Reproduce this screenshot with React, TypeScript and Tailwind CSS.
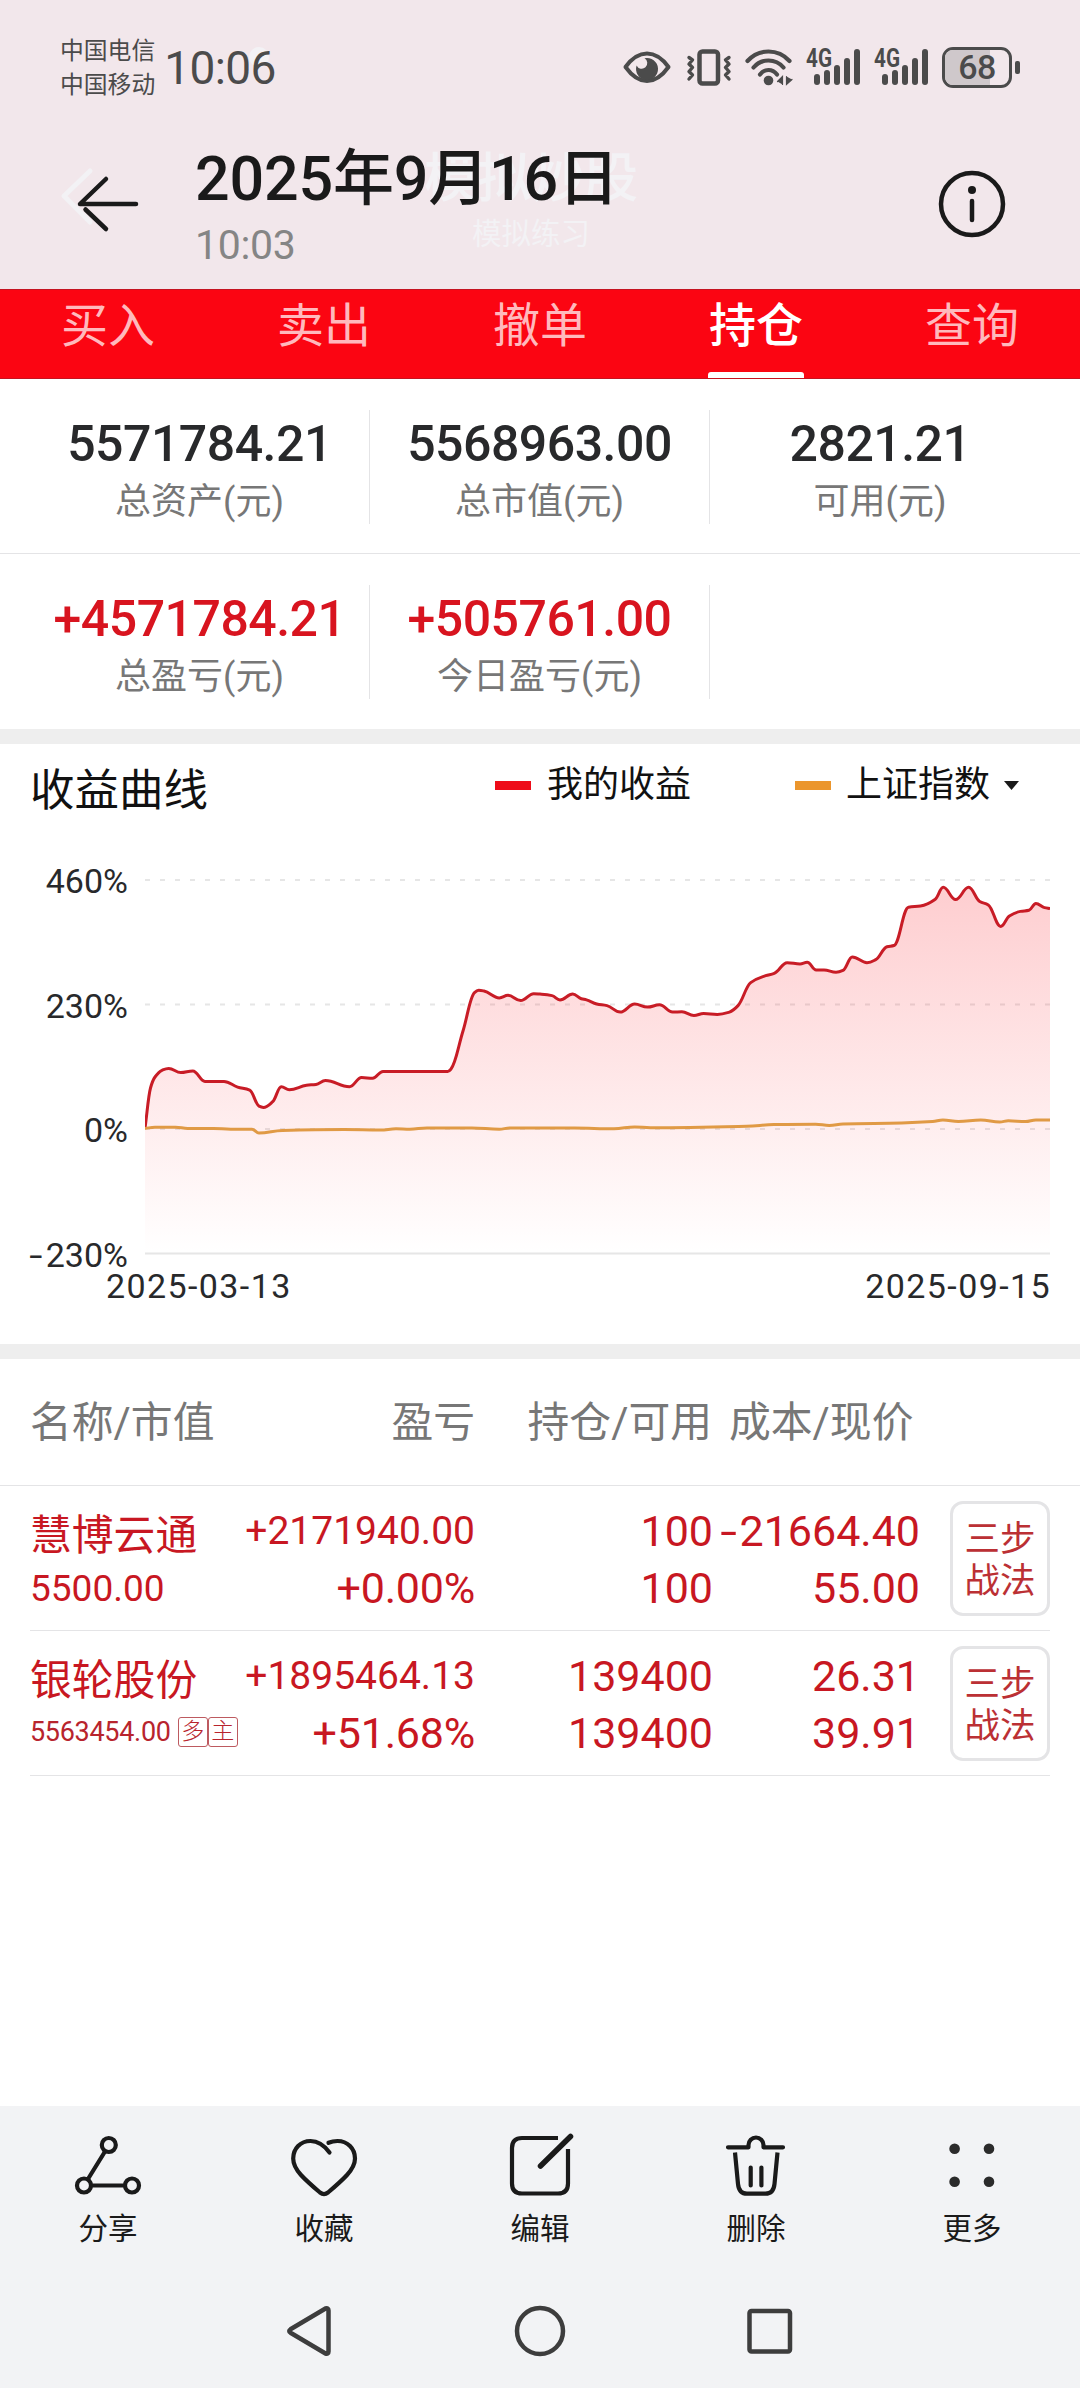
import type { ReactNode } from "react";

type Point = [number, number];

const tabs = ["买入", "卖出", "撤单", "持仓", "查询"];
const activeTab = "持仓";

const summaryRows = [
  [
    { label: "总资产(元)", value: "5571784.21" },
    { label: "总市值(元)", value: "5568963.00" },
    { label: "可用(元)", value: "2821.21" }
  ],
  [
    { label: "总盈亏(元)", value: "+4571784.21" },
    { label: "今日盈亏(元)", value: "+505761.00" },
    null
  ]
];

const holdings = [
  {
    name: "慧博云通",
    marketValue: "5500.00",
    tags: [],
    profit: "+2171940.00",
    profitRate: "+0.00%",
    amount: "100",
    available: "100",
    cost: "-21664.40",
    price: "55.00"
  },
  {
    name: "银轮股份",
    marketValue: "5563454.00",
    tags: ["多", "主"],
    profit: "+1895464.13",
    profitRate: "+51.68%",
    amount: "139400",
    available: "139400",
    cost: "26.31",
    price: "39.91"
  }
];

const profitPoints: Point[] = [
  [0, 249.4], [5.5, 209], [10, 198], [17, 191.3], [23.7, 189.4], [35.8, 193.6], [47.8, 192],
  [60, 202.4], [79, 202.4], [92.6, 208.1], [104.7, 211.2], [114, 227.1], [118.4, 228.4],
  [127.7, 222.7], [136.3, 207.7], [144.3, 210.8], [161.5, 206.2], [171, 205.4], [180.4, 201.6],
  [204.5, 207.7], [216.6, 198.5], [227.6, 199.3], [238, 192.4], [302.7, 192.4], [306, 190],
  [318, 152], [329.5, 113.6], [333.7, 111.3], [339, 112], [354.3, 118.9], [363, 116.3],
  [375.7, 121.6], [388.7, 114.7], [395, 115.1], [407, 116.6], [415, 120.9], [427.7, 115.1],
  [436.3, 119.7], [441.5, 120.9], [451.8, 125], [462, 126.6], [475.2, 133.1], [489.7, 125],
  [502.4, 128.1], [514.5, 125.8], [527.6, 133.1], [536.9, 132.7], [548.9, 136.5], [558.6, 134.6],
  [572.3, 135.4], [584.4, 133.1], [593, 126.6], [605.7, 103.6], [620.6, 96.7], [629.2, 94.4],
  [642.2, 83.7], [655, 84.9], [662.2, 83.3], [671.2, 91], [679, 91], [691, 93.3], [698, 91.4],
  [707.3, 78], [722, 83.7], [730.7, 80.7], [742, 67.7], [749, 66.5], [763.5, 28.2],
  [775.5, 27.1], [790.3, 20.2], [798.2, 8.3], [810.6, 20.6], [823.7, 8.3], [834.7, 22.5],
  [843.3, 25.9], [855.7, 47.4], [864.4, 37], [875.4, 32.4], [884, 31.3], [890.9, 24.4],
  [899.5, 28.6], [905, 29.4]
];

const indexPoints: Point[] = [
  [0, 249.4], [10, 248.3], [30.6, 248.3], [42.7, 249.4], [68.5, 249.4], [85.7, 250.2],
  [107, 250.2], [114, 254], [137.4, 251.4], [199.4, 250.6], [235.5, 251], [251, 249.8],
  [264.8, 250.2], [282, 249], [326.8, 249], [354.3, 250.2], [364.6, 249], [429.4, 249],
  [469, 249.8], [489.7, 247.9], [505.2, 248.7], [601.6, 247.2], [629, 245.6], [670.5, 245.2],
  [684.3, 246.4], [698, 244.9], [756.6, 244], [787.6, 242.6], [797.9, 241], [813.4, 242.6],
  [835.8, 241], [854.7, 242.9], [863.3, 241.8], [880.5, 242.6], [890.9, 241], [905, 241]
];

// monotone cubic, so flat stretches stay flat
function smoothPath(points: Point[]) {
  const slopes = points.slice(1).map(([x, y], i) => (y - points[i][1]) / (x - points[i][0]));
  const tangents = points.map((_, i) => {
    if (i === 0) {
      return slopes[0];
    }
    if (i === points.length - 1) {
      return slopes[i - 1];
    }
    const a = slopes[i - 1];
    const b = slopes[i];
    return a * b <= 0 ? 0 : (2 * a * b) / (a + b);
  });

  let d = `M${points[0][0]} ${points[0][1]}`;
  for (let i = 1; i < points.length; i++) {
    const [x0, y0] = points[i - 1];
    const [x1, y1] = points[i];
    const h = (x1 - x0) * 0.4;
    d += `C${x0 + h} ${y0 + tangents[i - 1] * h} ${x1 - h} ${y1 - tangents[i] * h} ${x1} ${y1}`;
  }
  return d;
}

export default function App() {
  return (
    <main className="flex h-[2388px] w-[1080px] flex-col overflow-hidden bg-white font-[Roboto,'Noto_Sans_CJK_SC',sans-serif]">
      <Header />
      <TabBar />
      <Summary />
      <div className="h-[15px] shrink-0 bg-[#eeeeee]" />
      <ProfitChart />
      <div className="h-[15px] shrink-0 bg-[#eeeeee]" />
      <Holdings />
      <BottomBar />
    </main>
  );
}

function Header() {
  return (
    <header className="h-[289px] shrink-0 bg-[#f2e7eb]">
      <div className="flex h-[134px] items-start justify-between pr-[60px] pl-[60px]">
        <div className="flex">
          <div className="pt-[34px] text-[23.8px] leading-[34px] text-[#4b4b4b]">
            <p>中国电信</p>
            <p>中国移动</p>
          </div>
          <p className="relative mt-[38px] ml-[9px] text-[46px] leading-[60px] tracking-[-0.6px] text-[#4b4b4b]">
            <span className="absolute top-[9px] left-[85px] size-5 rounded-full bg-[#f3f2f5]" />
            <span className="relative">10:06</span>
          </p>
        </div>
        <StatusIcons />
      </div>
      <div className="relative h-[155px]">
        <GhostTitle />
        <div className="relative flex items-start">
          <svg className="mt-[40px] ml-[72px] h-[60px] w-[72px]" viewBox="0 0 72 60" fill="none" stroke="#1a1a1a" strokeWidth="4.5" strokeLinecap="round">
            <path d="M64 30H8L34 5" strokeLinejoin="round" />
            <path d="M13.5 35.5L34 55" />
          </svg>
          <div className="ml-[51px] grow">
            <h1 className="mt-[10px] text-[61px] leading-[70px] font-medium tracking-[-0.2px] text-[#1a1a1a]">2025年9月16日</h1>
            <p className="mt-[6px] text-[41px] leading-[50px] tracking-[-0.3px] text-[#858585]">10:03</p>
          </div>
          <svg className="mt-[36px] mr-[74px] size-[68px]" viewBox="0 0 68 68" fill="none" stroke="#1a1a1a" strokeWidth="4.5">
            <circle cx="34" cy="34" r="31" />
            <circle cx="34" cy="20" r="4" fill="#1a1a1a" stroke="none" />
            <path d="M34 31V50" strokeLinecap="round" />
          </svg>
        </div>
      </div>
    </header>
  );
}

// title of the app page showing faintly through the translucent gallery bar
function GhostTitle() {
  return (
    <div className="absolute inset-0 text-[#f3f2f5]">
      <svg className="absolute top-[33px] left-[58px] h-[60px] w-[38px]" viewBox="0 0 38 60" fill="none" stroke="currentColor" strokeWidth="5">
        <path d="M32 4L6 29L32 55" strokeLinecap="round" strokeLinejoin="round" />
      </svg>
      <p className="absolute top-[13px] left-[424px] text-[53.5px] leading-[64px] font-medium">模拟炒股</p>
      <p className="absolute top-[80px] left-[472px] text-[29.5px] leading-[40px]">模拟练习</p>
    </div>
  );
}

function StatusIcons() {
  return (
    <div className="flex pt-[46px] text-[#4b4b4b]">
      <svg className="h-[42px] w-[48px]" viewBox="0 0 48 42">
        <path d="M2.5 21C9 12 15.5 7.5 24 7.5S39 12 45.5 21C39 30 32.5 35 24 35S9 30 2.5 21Z" fill="none" stroke="currentColor" strokeWidth="4" strokeLinejoin="round" />
        <path d="M21.5 12.3A11 11 0 1 1 13.6 19.5A5.6 5.6 0 1 0 21.5 12.3Z" fill="currentColor" />
      </svg>
      <svg className="ml-[14px] h-[42px] w-[48px]" viewBox="0 0 48 42" fill="none" stroke="currentColor" strokeLinecap="round" strokeLinejoin="round">
        <rect x="14.5" y="5.5" width="18.5" height="32" rx="3" strokeWidth="4.5" />
        <path d="M4 11.5L7.5 14L4 18L7.5 21.5L4 25.5L7.5 29L4 33M44 11.5L40.5 14L44 18L40.5 21.5L44 25.5L40.5 29L44 33" strokeWidth="3.4" />
      </svg>
      <svg className="ml-[11px] h-[42px] w-[50px]" viewBox="0 0 50 42" fill="none" stroke="currentColor" strokeWidth="4.2" strokeLinecap="round">
        <path d="M3.5 15Q12 5.5 24.5 5.5T45.5 15" />
        <path d="M9.5 21.5Q15.500 14.5 24.5 14.5T39.5 21.5" />
        <path d="M16 28.5Q19.5 24 24.5 24T33 28.5" />
        <circle cx="24.5" cy="34.5" r="4.8" fill="currentColor" stroke="none" />
        <path d="M33.5 35.500L38.5 30.500V38.500M48 33.500L42.500 38.500V30.500" fill="currentColor" strokeWidth="1.2" />
      </svg>
      <Signal className="ml-[12px] h-[42px] w-[57px] overflow-visible" />
      <Signal className="ml-[11px] h-[42px] w-[57px] overflow-visible" />
      <div className="ml-[11px] flex items-center">
        <div className="relative flex h-[41px] w-[70px] items-center justify-center overflow-hidden rounded-[11px] border-[3px] border-[#4b4b4b]">
          <span className="absolute inset-y-0 left-0 w-[45px] bg-[#cfc8cb]" />
          <span className="relative text-[34px] leading-[40px] font-medium tracking-[-0.5px]">68</span>
        </div>
        <span className="ml-[3px] h-[13px] w-[5px] rounded-[2px] bg-[#4b4b4b]" />
      </div>
    </div>
  );
}

function Signal({ className }: { className: string }) {
  return (
    <svg className={className} viewBox="0 0 57 42" fill="currentColor">
      <text x="0" y="21" fontSize="25" fontWeight="700" textLength="26" lengthAdjust="spacingAndGlyphs">4G</text>
      <rect x="8" y="28" width="6" height="11" rx="3" />
      <rect x="18" y="24" width="6" height="15" rx="3" />
      <rect x="28" y="19" width="6" height="20" rx="3" />
      <rect x="38" y="12" width="6" height="27" rx="3" />
      <rect x="48" y="3" width="6" height="36" rx="3" />
    </svg>
  );
}

function TabBar() {
  return (
    <nav className="grid h-[90px] shrink-0 grid-cols-5 border-y border-[#c51320] bg-[#fb0512] text-[47px]">
      {tabs.map((tab) => (
        <div key={tab} className="flex flex-col items-center justify-between pt-[6px]">
          <span className={tab === activeTab ? "leading-[60px] font-medium text-white" : "leading-[60px] text-[#ffb9bd]"}>
            {tab}
          </span>
          {tab === activeTab ? <span className="h-[6px] w-[96px] rounded-t-[3px] bg-white" /> : null}
        </div>
      ))}
    </nav>
  );
}

function Summary() {
  return (
    <section className="shrink-0 divide-y divide-[#e4e4e6]">
      {summaryRows.map((row, index) => (
        <div key={index} className="grid h-[175px] grid-cols-3 px-[30px] pt-[31px] text-center">
          {row.map((item, column) => (
            <div key={column} className={column < 2 ? "h-[114px] border-r border-[#e4e4e6]" : "h-[114px]"}>
              {item ? (
                <>
                  <p
                    className={
                      item.value.startsWith("+")
                        ? "mt-[4px] text-[50px] leading-[60px] font-medium tracking-[-0.5px] text-[#d8141f]"
                        : "mt-[4px] text-[50px] leading-[60px] font-medium tracking-[-0.5px] text-[#28292b]"
                    }
                  >
                    {item.value}
                  </p>
                  <p className="text-[36px] leading-[56px] text-[#777777]">{item.label}</p>
                </>
              ) : null}
            </div>
          ))}
        </div>
      ))}
    </section>
  );
}

function ProfitChart() {
  const line = smoothPath(profitPoints);

  return (
    <section className="h-[600px] shrink-0 px-[30px] pt-[20px] text-[#111111]">
      <div className="flex h-[60px]">
        <h2 className="w-[465px] text-[44.5px] leading-[54px]">收益曲线</h2>
        <div className="flex h-[42px] grow items-center text-[36px] leading-[42px]">
          <span className="mr-[16px] h-[9px] w-[36px] bg-[#ee0c19]" />
          <span className="w-[248px]">我的收益</span>
          <span className="mr-[15px] h-[9px] w-[36px] bg-[#eb962d]" />
          <span>上证指数</span>
          <svg className="ml-[14px] h-[9px] w-[15px]" viewBox="0 0 15 9">
            <path d="M0 0H15L7.5 9Z" fill="#1a1a1a" />
          </svg>
        </div>
      </div>
      <div className="mt-[37px] flex h-[414px]">
        <div className="flex w-[98px] flex-col items-end text-[34px] leading-[40px] text-[#28292b]">
          <p className="h-[124.5px] shrink-0">460%</p>
          <p className="h-[124.5px] shrink-0">230%</p>
          <p className="h-[124.5px] shrink-0">0%</p>
          <p className="flex shrink-0">
            <MinusSign />
            230%
          </p>
        </div>
        <svg className="mt-[18px] ml-[17px] h-[376px] w-[905px]" viewBox="0 0 905 376" fill="none">
          <defs>
            <linearGradient id="profit-fill" x1="0" y1="0" x2="0" y2="1">
              <stop offset="0" stopColor="#fa141e" stopOpacity="0.21" />
              <stop offset="1" stopColor="#fa141e" stopOpacity="0" />
            </linearGradient>
          </defs>
          <path d="M0 1H905M0 125.5H905M0 250H905" stroke="#e6e6e6" strokeWidth="2" strokeDasharray="5 10" />
          <path d="M0 374.5H905" stroke="#e6e6e6" strokeWidth="2" />
          <path d={`${line}V374H0Z`} fill="url(#profit-fill)" />
          <path d={line} stroke="#c81c26" strokeWidth="3" strokeLinejoin="round" />
          <path d={smoothPath(indexPoints)} stroke="#e09a45" strokeWidth="3" strokeLinejoin="round" />
        </svg>
      </div>
      <div className="-mt-[9px] -mr-px flex justify-between pl-[76px] text-[34px] leading-[40px] tracking-[1.4px] text-[#28292b]">
        <span>2025-03-13</span>
        <span>2025-09-15</span>
      </div>
    </section>
  );
}

// stretched hyphen, as wide as a figure's dash
function MinusSign() {
  return <span className="mr-[3px] inline-block origin-right scale-x-[1.4]">-</span>;
}

function Holdings() {
  return (
    <section className="grow">
      <div className="flex h-[127px] border-b border-[#e4e4e6] pl-[30px] text-[41.8px] leading-[128px] whitespace-nowrap text-[#777777]">
        <span className="w-[200px]">名称/市值</span>
        <span className="w-[245px] text-right">盈亏</span>
        <span className="w-[237px] text-right">持仓/可用</span>
        <span className="ml-[17px]">成本/现价</span>
      </div>
      {holdings.map((item) => (
        <div key={item.name} className="mx-[30px] flex h-[145px] border-b border-[#e4e4e6] pt-[15px] whitespace-nowrap text-[#c81722]">
          <div className="w-[210px]">
            <p className="text-[41.8px] leading-[70px]">{item.name}</p>
            {item.tags.length ? (
              <div className="-mt-[1px] flex items-center text-[27px] leading-[34px] text-[#b8242d]">
                <span className="mr-[7px] tracking-[-0.3px]">{item.marketValue}</span>
                {item.tags.map((tag) => (
                  <span key={tag} className="flex size-[30px] items-center justify-center rounded-[3px] border border-[#bd5a60] text-[23px] font-light">
                    {tag}
                  </span>
                ))}
              </div>
            ) : (
              <p className="-mt-[1px] text-[37px] leading-[38px]">{item.marketValue}</p>
            )}
          </div>
          <div className="w-[235px] pt-[1px] text-right">
            <p className="text-[39px] leading-[58px]">{item.profit}</p>
            <p className="text-[43px] leading-[57px] tracking-[-0.2px]">{item.profitRate}</p>
          </div>
          <div className="w-[238px] pt-[1.5px] text-right text-[43px] leading-[57px]">
            <p>{item.amount}</p>
            <p>{item.available}</p>
          </div>
          <div className="flex w-[207px] flex-col items-end pt-[1.5px] text-[43px] leading-[57px]">
            <p className="flex">
              {item.cost.startsWith("-") ? <MinusSign /> : null}
              {item.cost.replace("-", "")}
            </p>
            <p>{item.price}</p>
          </div>
          <button className="ml-auto flex h-[115px] w-[100px] flex-col items-center justify-center rounded-[13px] border-[3px] border-[#e4e4e6] pt-[2px] text-[35.5px] leading-[42px] text-[#bb3034]">
            <span>三步</span>
            <span>战法</span>
          </button>
        </div>
      ))}
    </section>
  );
}

function Action({ label, children }: { label: string; children: ReactNode }) {
  return (
    <div className="flex flex-col items-center">
      <svg className="size-[72px]" viewBox="0 0 72 72" fill="none" stroke="#1a1a1a" strokeWidth="4.2" strokeLinecap="round" strokeLinejoin="round">
        {children}
      </svg>
      <span className="mt-[7px] text-[29.5px] leading-[40px] text-[#1a1a1a]">{label}</span>
    </div>
  );
}

function BottomBar() {
  return (
    <footer className="h-[282px] shrink-0 bg-[#f2f3f5]">
      <div className="grid grid-cols-5 pt-[24px]">
        <Action label="分享">
          <circle cx="36.8" cy="15" r="7" />
          <circle cx="12" cy="55.5" r="7" />
          <circle cx="60" cy="55.5" r="7" />
          <path d="M33 21.5L16 49M19.5 55.5H52.5" />
        </Action>
        <Action label="收藏">
          <path d="M41.5 22.5C36 15 30 11 22.5 11C12.5 11 5.2 18.5 5.2 28.5C5.2 35 8.5 40 13 45C19 51.5 25.5 57 32 62.5C34.5 64.5 37.5 64.5 40 62.5C46.5 57 53 51.5 59 45C63.5 40 67 35 67 28.5C67 18.5 59.5 11 49.5 11C46.5 11 43.5 11.5 40.5 12.8" />
        </Action>
        <Action label="编辑">
          <path d="M54 8H18Q8 8 8 18V53.5Q8 63.5 18 63.5H54Q64 63.5 64 53.5V19" strokeLinecap="butt" />
          <path d="M36.5 36L66.5 6.5" strokeWidth="5.5" />
        </Action>
        <Action label="删除">
          <path d="M8 17.3H28.5V15A7.5 7.5 0 0 1 43.5 15V17.3H63" />
          <path d="M15 22.5L18 54Q19 63.7 27 63.7H45.5Q53.5 63.7 54.5 54L57.5 22.5" strokeLinecap="butt" />
          <path d="M30.7 37.5V55.5M41.4 37.5V55.5" />
        </Action>
        <Action label="更多">
          <g fill="#2b2b2b" stroke="none">
            <circle cx="18.6" cy="18.7" r="5.3" />
            <circle cx="53" cy="18.7" r="5.3" />
            <circle cx="18.6" cy="51.7" r="5.3" />
            <circle cx="53" cy="51.7" r="5.3" />
          </g>
        </Action>
      </div>
      <div className="mt-[52px] flex justify-center gap-[170px]">
        <svg className="size-[60px]" viewBox="0 0 60 60" fill="none" stroke="#3d3d3d" strokeWidth="4.5" strokeLinejoin="round">
          <path d="M10.5 28.3L45.5 7.5Q48.5 6.5 48.5 9.5V50.5Q48.5 53.5 45.5 52.5L10.5 31.7Q8 30 10.5 28.3Z" />
        </svg>
        <svg className="size-[60px]" viewBox="0 0 60 60" fill="none" stroke="#3d3d3d" strokeWidth="4.5">
          <circle cx="30" cy="30" r="23" />
        </svg>
        <svg className="size-[60px]" viewBox="0 0 60 60" fill="none" stroke="#3d3d3d" strokeWidth="4.5">
          <rect x="9.5" y="10" width="40.5" height="40.5" rx="2" />
        </svg>
      </div>
    </footer>
  );
}
